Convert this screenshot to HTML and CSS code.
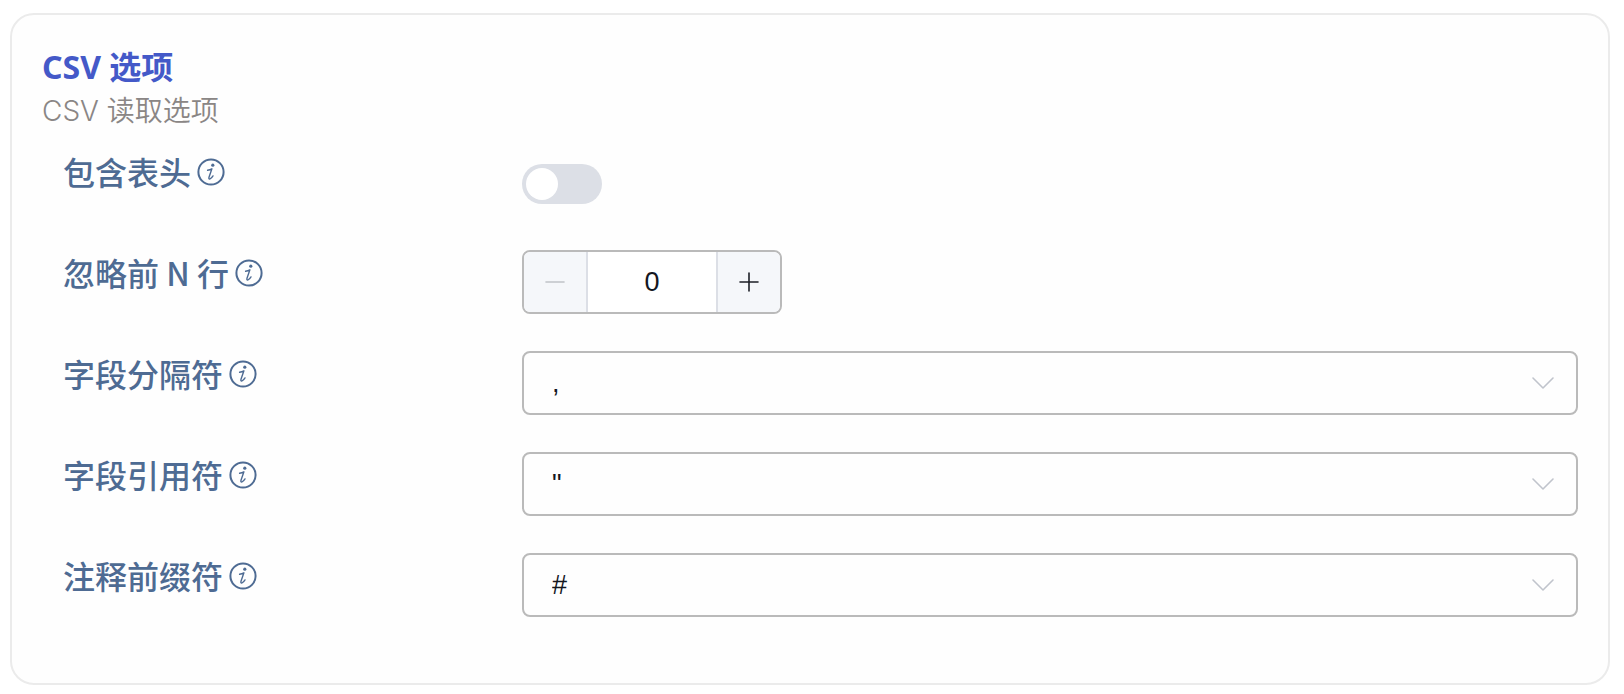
FILE: index.html
```html
<!DOCTYPE html>
<html lang="zh-CN">
<head>
<meta charset="utf-8">
<meta name="viewport" content="width=device-width, initial-scale=1">
<title>CSV 选项</title>
<link rel="stylesheet" href="styles.css">
</head>
<body>
<svg class="sprite" aria-hidden="true">
  <symbol id="info" viewBox="0 0 28 28">
    <circle cx="14" cy="14" r="12.6" fill="none" stroke="currentColor" stroke-width="2"/>
    <circle cx="15.8" cy="7.2" r="1.6" fill="currentColor"/>
    <path d="M10.6 12.3 C12.2 12 13.6 11.5 14.9 10.8 L12 19.2 C11.4 21.2 12.4 21.4 13.6 20.5 C14.6 19.8 15.3 18.9 16 17.9" fill="none" stroke="currentColor" stroke-width="1.4" stroke-linecap="round" stroke-linejoin="round"/>
  </symbol>
  <symbol id="chevron" viewBox="0 0 22 12">
    <path d="M1 1 L11 11 L21 1" fill="none" stroke="currentColor" stroke-width="1.6" stroke-linecap="round" stroke-linejoin="round"/>
  </symbol>
</svg>
<form class="card">
  <h2 class="title">CSV 选项</h2>
  <p class="subtitle">CSV 读取选项</p>
  <div class="rows">
    <div class="row">
      <div class="caption"><label for="header">包含表头</label><button class="info" type="button" aria-label="说明"><svg><use href="#info"/></svg></button></div>
      <div class="control"><input class="switch" id="header" type="checkbox" role="switch"></div>
    </div>
    <div class="row">
      <div class="caption"><label for="skip">忽略前 N 行</label><button class="info" type="button" aria-label="说明"><svg><use href="#info"/></svg></button></div>
      <div class="control">
        <div class="stepper">
          <button class="step" type="button" aria-label="减少" disabled><svg viewBox="0 0 20 20"><path d="M1 10 H19"/></svg></button>
          <input class="number" id="skip" type="text" inputmode="numeric" value="0">
          <button class="step" type="button" aria-label="增加"><svg viewBox="0 0 20 20"><path d="M1 10 H19 M10 1 V19"/></svg></button>
        </div>
      </div>
    </div>
    <div class="row">
      <div class="caption"><label for="separator">字段分隔符</label><button class="info" type="button" aria-label="说明"><svg><use href="#info"/></svg></button></div>
      <div class="control dropdown"><select class="select" id="separator"><option>,</option></select><svg class="chevron"><use href="#chevron"/></svg></div>
    </div>
    <div class="row">
      <div class="caption"><label for="quote">字段引用符</label><button class="info" type="button" aria-label="说明"><svg><use href="#info"/></svg></button></div>
      <div class="control dropdown"><select class="select" id="quote"><option>"</option></select><svg class="chevron"><use href="#chevron"/></svg></div>
    </div>
    <div class="row">
      <div class="caption"><label for="comment">注释前缀符</label><button class="info" type="button" aria-label="说明"><svg><use href="#info"/></svg></button></div>
      <div class="control dropdown"><select class="select" id="comment"><option>#</option></select><svg class="chevron"><use href="#chevron"/></svg></div>
    </div>
  </div>
</form>
</body>
</html>
```
FILE: styles.css
```css
* {
  box-sizing: border-box;
}

body {
  margin: 0;
  padding: 13px 14px 9px 10px;
  background: #fff;
  font-family: Inter, "Noto Sans CJK SC", sans-serif;
}

.sprite {
  display: none;
}

.card {
  padding: 30px 30px 66px;
  border: 2px solid #ebebeb;
  border-radius: 24px;
  background: #fefefe;
}

.title {
  margin: 0;
  color: #4459c8;
  font: 700 32px/44px "Noto Sans", "Noto Sans CJK SC", sans-serif;
}

.subtitle {
  margin: 0;
  color: #8a8685;
  font-size: 28px;
  font-weight: 350;
  line-height: 44px;
}

.rows {
  display: grid;
  gap: 37px;
  margin-top: 16px;
}

.row {
  display: grid;
  grid-template-columns: 5fr 11fr;
  min-height: 64px;
}

.caption {
  display: flex;
  align-items: center;
  gap: 6px;
  height: 46px;
  padding-left: 21px;
  color: #4e6b93;
  font: 500 32px/44px "Noto Sans CJK SC", sans-serif;
}

.caption label {
  padding-bottom: 2px;
}

.info {
  display: flex;
  padding: 0;
  border: 0;
  background: none;
  color: inherit;
}

.info svg {
  width: 28px;
  height: 28px;
}

.control {
  display: flex;
  align-items: center;
}

.switch {
  width: 80px;
  height: 40px;
  margin: 6px 0 0;
  padding: 4px;
  border-radius: 20px;
  background: #dcdfe6;
  appearance: none;
}

.switch::before {
  content: "";
  display: block;
  width: 32px;
  height: 32px;
  border-radius: 50%;
  background: #fff;
}

.switch:checked {
  background: #4459c8;
}

.switch:checked::before {
  margin-left: auto;
}

.stepper {
  display: flex;
  width: 260px;
  height: 64px;
  overflow: hidden;
  border: 2px solid #bababa;
  border-radius: 8px;
}

.step {
  display: grid;
  flex: 0 0 62px;
  place-items: center;
  padding: 0;
  border: 0;
  background: #f5f7fa;
  color: #1c1f26;
}

.step:disabled {
  color: #c0c3c8;
}

.step svg {
  width: 20px;
  height: 20px;
  fill: none;
  stroke: currentColor;
  stroke-width: 1.6;
  stroke-linecap: round;
}

.number {
  flex: 1;
  min-width: 0;
  padding: 0;
  border: solid #dcdfe6;
  border-width: 0 2px;
  background: #fff;
  color: #14171f;
  font: 27px/60px "Liberation Sans", sans-serif;
  text-align: center;
}

.dropdown {
  position: relative;
}

.select {
  width: 100%;
  height: 64px;
  padding: 0 64px 0 28px;
  border: 2px solid #bababa;
  border-radius: 8px;
  background: #fefefe;
  color: #14171f;
  font: 27px/60px "Liberation Sans", sans-serif;
  appearance: none;
}

.chevron {
  position: absolute;
  right: 24px;
  width: 22px;
  height: 12px;
  color: #c0c4cc;
  pointer-events: none;
}
```
